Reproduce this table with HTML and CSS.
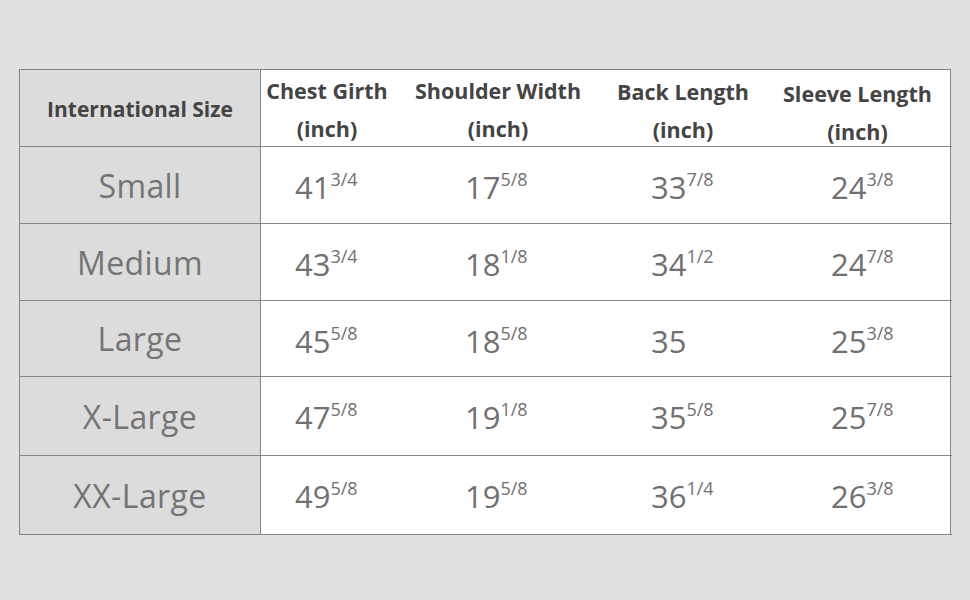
FILE: index.html
```
<!DOCTYPE html>
<html>
<head>
<meta charset="utf-8">
<link rel="stylesheet" href="styles.css">
</head>
<body>
<div class="page">
  <div class="chart">
    <div class="cell side head">International Size</div>
    <div class="cell head c1">Chest Girth<br>(inch)</div>
    <div class="cell head c2">Shoulder Width<br>(inch)</div>
    <div class="cell head c3 low">Back Length<br>(inch)</div>
    <div class="cell head c4 lower">Sleeve Length<br>(inch)</div>

    <div class="cell side">Small</div>
    <div class="cell num c1">41<sup>3/4</sup></div>
    <div class="cell num c2">17<sup>5/8</sup></div>
    <div class="cell num c3">33<sup>7/8</sup></div>
    <div class="cell num c4">24<sup>3/8</sup></div>

    <div class="cell side">Medium</div>
    <div class="cell num c1">43<sup>3/4</sup></div>
    <div class="cell num c2">18<sup>1/8</sup></div>
    <div class="cell num c3">34<sup>1/2</sup></div>
    <div class="cell num c4">24<sup>7/8</sup></div>

    <div class="cell side">Large</div>
    <div class="cell num c1">45<sup>5/8</sup></div>
    <div class="cell num c2">18<sup>5/8</sup></div>
    <div class="cell num c3">35</div>
    <div class="cell num c4">25<sup>3/8</sup></div>

    <div class="cell side">X-Large</div>
    <div class="cell num c1">47<sup>5/8</sup></div>
    <div class="cell num c2">19<sup>1/8</sup></div>
    <div class="cell num c3">35<sup>5/8</sup></div>
    <div class="cell num c4">25<sup>7/8</sup></div>

    <div class="cell side">XX-Large</div>
    <div class="cell num c1">49<sup>5/8</sup></div>
    <div class="cell num c2">19<sup>5/8</sup></div>
    <div class="cell num c3">36<sup>1/4</sup></div>
    <div class="cell num c4">26<sup>3/8</sup></div>
  </div>
</div>
</body>
</html>
```
FILE: styles.css
```
html, body {
  margin: 0;
  padding: 0;
  background: #e1e1e1;
}
.page {
  width: 970px;
  height: 600px;
  padding: 69px 0 0 19px;
  box-sizing: border-box;
  font-family: "Open Sans", "Noto Sans", sans-serif;
}
.chart {
  display: grid;
  grid-template-columns: 241px 132px 210px 160px 189px;
  grid-template-rows: 77px 77px 77px 76px 79px 79px;
  width: 932px;
  border-top: 1px solid #858585;
  border-left: 1px solid #858585;
  border-right: 1px solid #858585;
  box-sizing: border-box;
  background: #ffffff;
}
.cell {
  border-bottom: 1px solid #858585;
  box-sizing: border-box;
  display: flex;
  align-items: center;
}
.side {
  background: #dcdcdc;
  border-right: 1px solid #858585;
  justify-content: center;
  font-size: 32px;
  color: #747474;
  letter-spacing: 0.4px;
}
.side.head {
  font-size: 21px;
  font-weight: 700;
  color: #444444;
  letter-spacing: 0;
  padding-top: 2px;
}
.head {
  font-size: 21.5px;
  font-weight: 700;
  color: #444444;
  line-height: 38px;
  justify-content: center;
  text-align: center;
  padding-top: 4px;
}
.head.low { padding-top: 6px; }
.head.lower { padding-top: 10px; }
.num {
  font-size: 31px;
  color: #707070;
  align-items: flex-start;
  padding-top: 19px;
}
.num sup {
  font-size: 18px;
  vertical-align: top;
  line-height: 1;
  position: relative;
  top: 4px;
}
.c1.num { padding-left: 34px; }
.c2.num { padding-left: 72px; }
.c3.num { padding-left: 48px; }
.c4.num { padding-left: 68px; }
```
